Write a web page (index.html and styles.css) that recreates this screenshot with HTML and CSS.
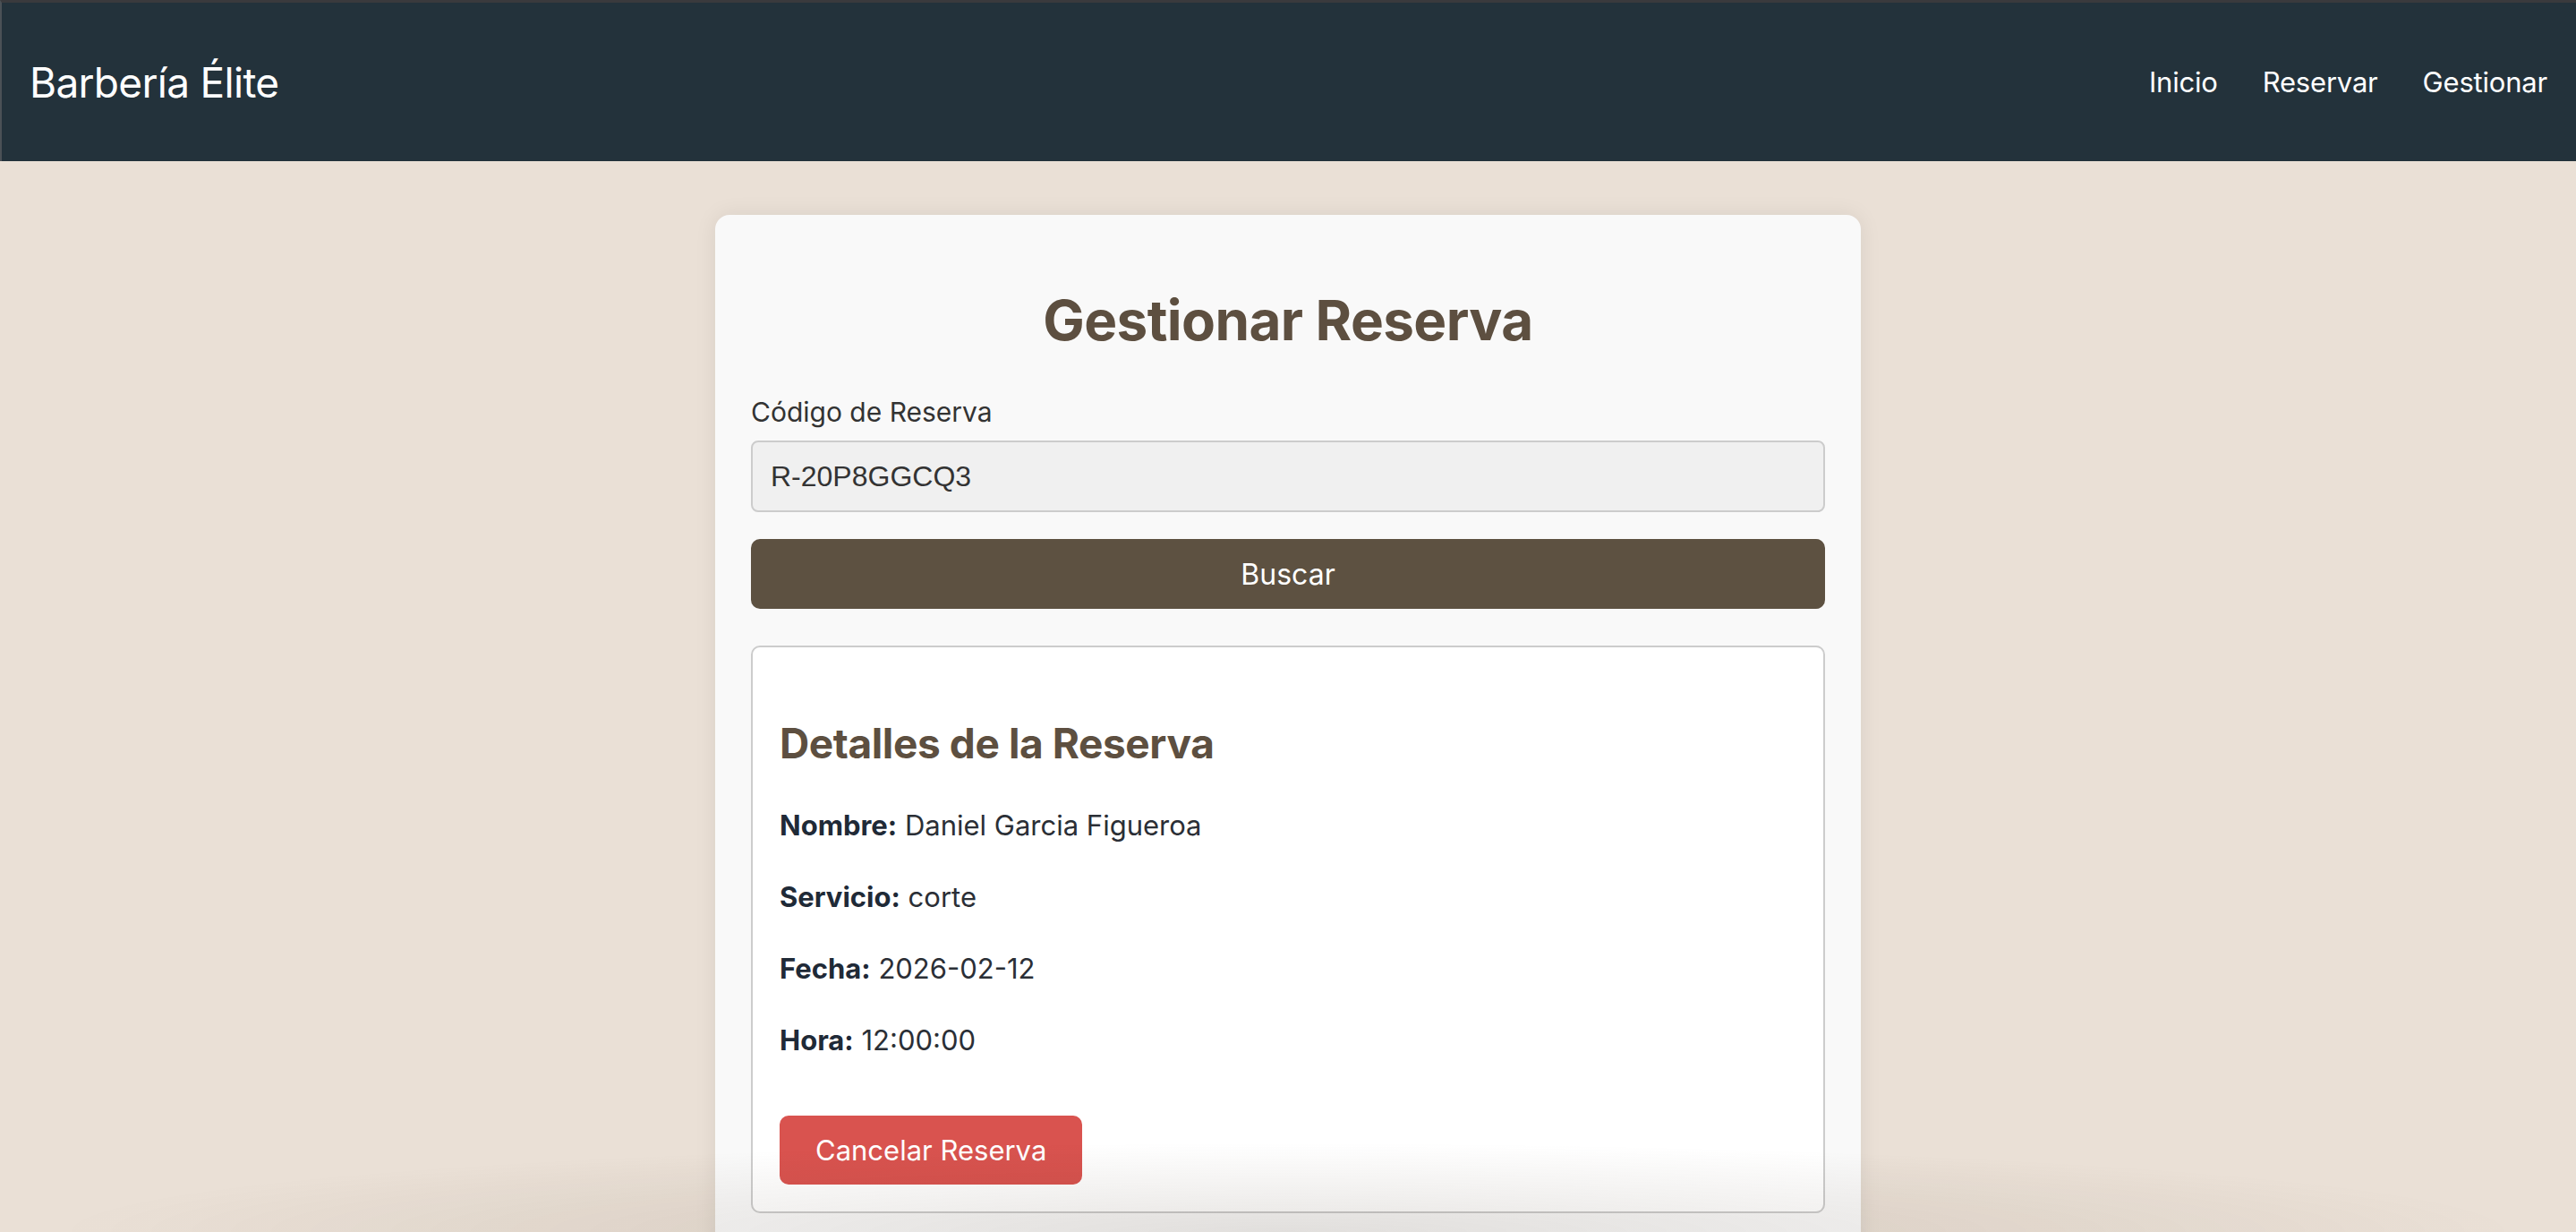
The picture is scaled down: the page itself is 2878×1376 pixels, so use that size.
FILE: index.html
```html
<!DOCTYPE html>
<html lang="es">
<head>
<meta charset="utf-8">
<title>Gestionar Reserva - Barbería Élite</title>
<link rel="stylesheet" href="styles.css">
</head>
<body>
<header class="navbar">
  <div class="brand">Barbería Élite</div>
  <nav class="nav-links">
    <a href="#">Inicio</a>
    <a href="#">Reservar</a>
    <a href="#">Gestionar</a>
  </nav>
</header>
<main class="container">
  <section class="card">
    <h2 class="card-title">Gestionar Reserva</h2>
    <form class="search-form">
      <label class="field-label" for="codigo">Código de Reserva</label>
      <input class="field-input" id="codigo" type="text" value="R-20P8GGCQ3">
      <button class="btn-primary" type="button">Buscar</button>
    </form>
    <div class="details">
      <h3 class="details-title">Detalles de la Reserva</h3>
      <p class="detail-row"><strong>Nombre:</strong> Daniel Garcia Figueroa</p>
      <p class="detail-row"><strong>Servicio:</strong> corte</p>
      <p class="detail-row"><strong>Fecha:</strong> 2026-02-12</p>
      <p class="detail-row"><strong>Hora:</strong> 12:00:00</p>
      <button class="btn-danger" type="button">Cancelar Reserva</button>
    </div>
  </section>
</main>
<div class="bottom-shade"></div>
</body>
</html>
```
FILE: styles.css
```css
html, body {
  margin: 0;
  padding: 0;
}
body {
  background: #eae0d6;
  font-family: Inter, "Noto Sans", "Liberation Sans", sans-serif;
  color: #2b2f36;
  min-height: 100vh;
  overflow: hidden;
}
.navbar {
  height: 180px;
  box-sizing: border-box;
  background: #23323b;
  border-top: 3px solid #3a3a3d;
  border-left: 2px solid #4b5156;
  display: flex;
  align-items: center;
  justify-content: space-between;
  padding: 0 32px 0 31px;
}
.brand {
  color: #ffffff;
  font-size: 46px;
  line-height: 58px;
  font-weight: 400;
  letter-spacing: -0.7px;
}
.nav-links {
  display: flex;
  gap: 50px;
}
.nav-links a {
  color: #ffffff;
  text-decoration: none;
  font-size: 31px;
  line-height: 40px;
  letter-spacing: -0.2px;
}
.container {
  padding: 60px 0 0;
}
.card {
  width: 1280px;
  box-sizing: border-box;
  margin: 0 auto;
  padding: 40px 40px 80px;
  background: #f9f9f9;
  border-radius: 16px;
  box-shadow: 0 0 24px rgba(0, 0, 0, 0.08);
}
.card-title {
  margin: 39px 0 45px;
  text-align: center;
  font-size: 62px;
  line-height: 78px;
  font-weight: 700;
  color: #5d4f40;
  letter-spacing: -0.6px;
}
.search-form {
  display: flex;
  flex-direction: column;
}
.field-label {
  font-size: 30px;
  line-height: 36px;
  color: #333333;
  margin-bottom: 14px;
}
.field-input {
  height: 80px;
  box-sizing: border-box;
  padding: 0 20px;
  border: 2px solid #cccccc;
  border-radius: 8px;
  background: #f0f0f0;
  font-family: "Liberation Sans", Arial, sans-serif;
  font-size: 32px;
  color: #333333;
  outline: none;
}
.btn-primary {
  margin-top: 30px;
  height: 78px;
  border: none;
  border-radius: 10px;
  background: #5d5141;
  color: #ffffff;
  font-family: Inter, "Noto Sans", sans-serif;
  font-size: 32px;
}
.details {
  margin-top: 41px;
  border: 2px solid #cccccc;
  border-radius: 10px;
  background: #ffffff;
  padding: 30px;
}
.details-title {
  margin: 48px 0 39px;
  font-size: 46px;
  line-height: 58px;
  font-weight: 700;
  color: #5d4f40;
  letter-spacing: -0.4px;
}
.detail-row {
  margin: 32px 0;
  font-size: 31px;
  line-height: 48px;
  color: #2b2f36;
}
.detail-row strong {
  font-weight: 700;
  color: #1f2a37;
}
.btn-danger {
  margin-top: 28px;
  height: 77px;
  padding: 0 40px;
  border: none;
  border-radius: 10px;
  background: #d9534f;
  color: #ffffff;
  font-family: Inter, "Noto Sans", sans-serif;
  font-size: 31px;
}
.bottom-shade {
  position: fixed;
  left: 0;
  right: 0;
  bottom: 0;
  height: 100px;
  pointer-events: none;
  background: radial-gradient(ellipse 48% 100% at 50% 100%, rgba(60, 40, 20, 0.12), rgba(60, 40, 20, 0) 100%);
}
```
